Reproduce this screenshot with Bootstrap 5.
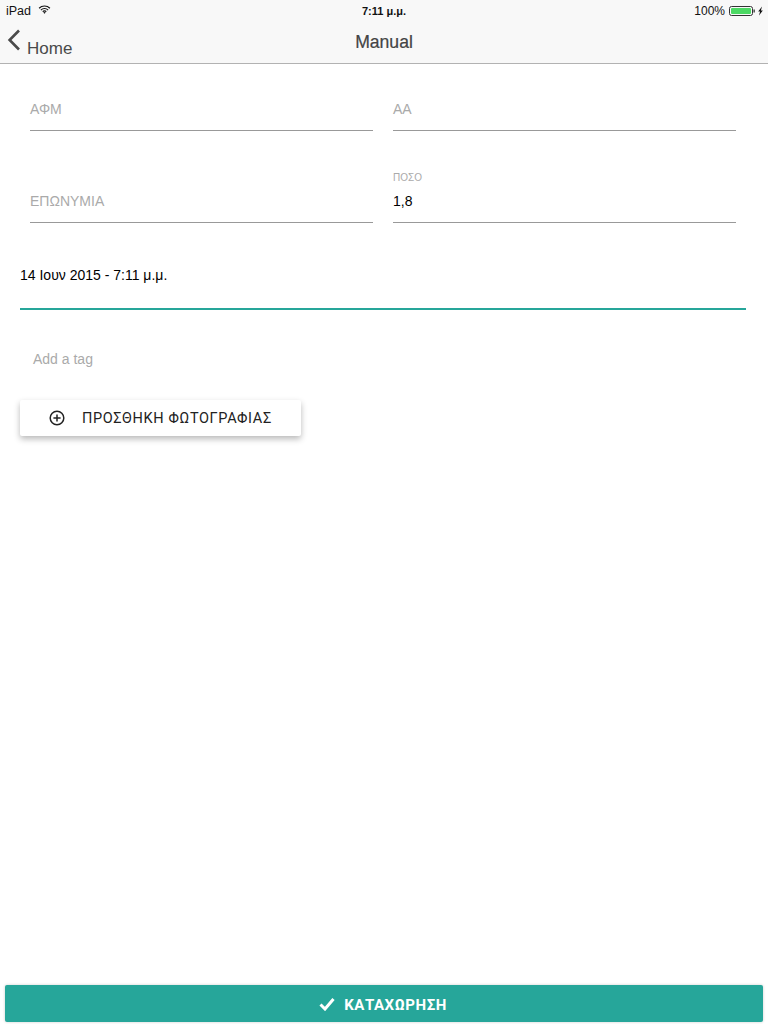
<!DOCTYPE html>
<html lang="el">
<head>
  <meta charset="UTF-8" />
  <meta name="viewport" content="width=device-width, initial-scale=1.0" />
  <title>Manual</title>
  <link href="https://cdn.jsdelivr.net/npm/bootstrap@5.3.3/dist/css/bootstrap.min.css" rel="stylesheet">
  <style>
    html, body { height: 1024px; overflow: hidden; }
    body { font-family: "Liberation Sans", Arial, sans-serif; font-size: 14px; color: #000; display: flex; flex-direction: column; background: #fff; }
    .top-bar { background: #f8f8f8; border-bottom: 1px solid #b2b2b2; height: 64px; flex: none; }
    .status-row { height: 20px; padding: 1px 5px 0 6px; font-size: 12.5px; line-height: 20px; color: #111; position: relative; }
    .status-time { position: absolute; left: 0; right: 0; text-align: center; font-weight: 600; font-size: 11px; }
    .status-pct { font-size: 12px; }
    .wifi-icon { margin: -2px 0 0 3px; }
    .title-row { height: 43px; position: relative; color: #444; }
    .back-link { font-size: 17px; color: #4a4a4a; padding-left: 7px; height: 43px; }
    .back-link span { margin-left: 6px; padding-top: 17px; line-height: 24px; }
    .back-link svg { margin-top: 9px; }
    .nav-title { position: absolute; left: 0; right: 0; top: 10px; text-align: center; font-size: 17.6px; font-weight: 500; -webkit-text-stroke: 0.2px #444; line-height: 24px; }
    .form-area { padding: 0 22px 0 20px; flex: 1 1 auto; }
    .field-row { padding: 0 10px; gap: 20px; }
    .float-field { flex: 1 1 0; border-bottom: 1px solid #999; color: #aaa; padding-bottom: 13px; }
    .first-row { height: 67px; padding-top: 35px; }
    .second-row { height: 92px; padding-top: 40px; }
    .float-field .tiny-label { font-size: 10px; line-height: 14px; display: block; height: 20px; }
    .float-field .val { color: #000; line-height: 20px; display: block; }
    .float-field .ph { line-height: 20px; display: block; }
    .second-row .ph { margin-top: 20px; }
    .date-field { margin-top: 42px; height: 45px; border-bottom: 2px solid #26a69a; line-height: 20px; font-size: 14px; }
    .tag-field { color: #aaa; padding: 39px 0 0 13px; line-height: 20px; }
    .photo-btn { font-family: Roboto, sans-serif; width: 281px; height: 36px; margin-top: 31px; font-size: 14.5px; letter-spacing: .65px; color: #222; background: #fff; border: 0; border-radius: 2px; box-shadow: 0 3px 6px rgba(0,0,0,.28); padding: 0 0 0 29px; gap: 17px; }
    .photo-btn span { padding-top: 2px; }
    .save-wrap { padding: 0 5px 2px; flex: none; background: #fff; }
    .save-btn { font-family: Roboto, sans-serif; font-weight: 700; height: 37px; width: 100%; padding: 4px 0 0; background: #26a69a; color: #fff; border: 0; border-radius: 2px; font-size: 15px; letter-spacing: .55px; gap: 9px; box-shadow: 0 0 3px rgba(0,0,0,.2); }
    .save-btn svg { margin: -4px 0 0 -2px; }
  </style>
</head>
<body>

  <div class="top-bar">
    <div class="status-row d-flex align-items-center justify-content-between">
      <div class="d-flex align-items-center gap-1">
        <span>iPad</span>
        <svg class="wifi-icon" width="13" height="9" viewBox="0 0 14 10"><path d="M1 3.6a8.5 8.5 0 0 1 12 0M3 5.6a5.6 5.6 0 0 1 8 0M5 7.4a2.8 2.8 0 0 1 4 0" fill="none" stroke="#111" stroke-width="1.3"/><path d="M7 9.8 5.6 8.4a2 2 0 0 1 2.8 0z" fill="#111"/></svg>
      </div>
      <div class="status-time">7:11 μ.μ.</div>
      <div class="d-flex align-items-center" style="gap:4px">
        <span class="status-pct">100%</span>
        <svg width="34" height="10" viewBox="0 0 34 10"><rect x=".5" y=".5" width="23" height="9" rx="2" fill="none" stroke="#333"/><rect x="2" y="2" width="20" height="6" rx="1" fill="#4cd964"/><rect x="24.5" y="3.5" width="1.3" height="3" fill="#333"/><path d="M33 .6 29.2 5.6h1.9L30 9.6l3.8-5.2h-1.9z" fill="#111"/></svg>
      </div>
    </div>
    <div class="title-row">
      <div class="back-link d-flex align-items-start">
        <svg width="14" height="22" viewBox="0 0 14 22"><path d="M12 1.5 2.6 11l9.4 9.5" fill="none" stroke="#4a4a4a" stroke-width="2.6"/></svg>
        <span>Home</span>
      </div>
      <div class="nav-title">Manual</div>
    </div>
  </div>

  <div class="form-area">
    <div class="field-row d-flex">
      <div class="float-field first-row"><span class="ph">ΑΦΜ</span></div>
      <div class="float-field first-row"><span class="ph">ΑΑ</span></div>
    </div>
    <div class="field-row d-flex">
      <div class="float-field second-row"><span class="ph">ΕΠΩΝΥΜΙΑ</span></div>
      <div class="float-field second-row"><span class="tiny-label">ΠΟΣΟ</span><span class="val">1,8</span></div>
    </div>
    <div class="date-field">14 Ιουν 2015 - 7:11 μ.μ.</div>
    <div class="tag-field">Add a tag</div>
    <button class="photo-btn btn d-flex align-items-center" type="button">
      <svg width="16" height="16" viewBox="0 0 16 16"><circle cx="8" cy="8" r="6.8" fill="none" stroke="#222" stroke-width="1.5"/><path d="M8 4.4v7.2M4.4 8h7.2" stroke="#222" stroke-width="1.5"/></svg>
      <span>ΠΡΟΣΘΗΚΗ ΦΩΤΟΓΡΑΦΙΑΣ</span>
    </button>
  </div>

  <div class="save-wrap">
    <button class="save-btn btn d-flex align-items-center justify-content-center" type="button">
      <svg width="16" height="14" viewBox="0 0 16 14"><path d="M1.5 7.5 6 12 14.5 2" fill="none" stroke="#fff" stroke-width="3"/></svg>
      <span>ΚΑΤΑΧΩΡΗΣΗ</span>
    </button>
  </div>

  <script src="https://cdn.jsdelivr.net/npm/bootstrap@5.3.3/dist/js/bootstrap.bundle.min.js"></script>
</body>
</html>
